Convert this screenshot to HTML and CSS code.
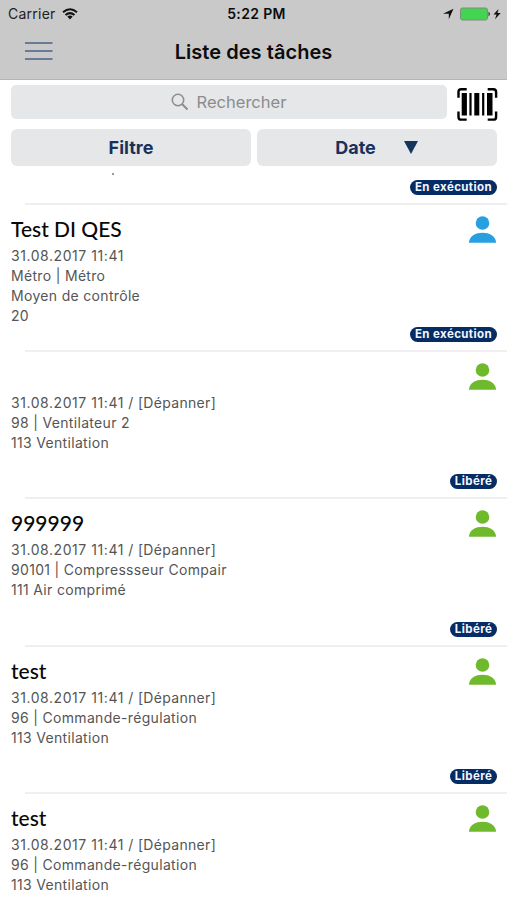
FILE: index.html
```html
<!DOCTYPE html>
<html lang="fr">
<head>
<meta charset="utf-8">
<title>Liste des tâches</title>
<link rel="stylesheet" href="styles.css">
</head>
<body>
<svg class="defs" width="0" height="0" aria-hidden="true">
  <symbol id="person" viewBox="0 0 27 27"><circle cx="13.5" cy="7" r="6.8"/><path d="M0 26.7v-1.2C1.2 20 6.5 16.8 13.5 16.8S25.8 20 27 25.500v1.200z"/></symbol>
</svg>
<header class="header">
  <div class="status">
    <div class="carrier"><span>Carrier</span>
      <svg width="16" height="12" viewBox="0 0 16 12"><g fill="none" stroke="#111" stroke-width="2"><path d="M1 4.200Q8-1.800 15 4.200"/><path d="M3.500 7Q8 3.200 12.500 7"/></g><path d="M5.300 8.500Q8 6.500 10.700 8.500L8 11.500z" fill="#111"/></svg>
    </div>
    <span class="clock">5:22 PM</span>
    <div class="power">
      <svg width="60" height="14" viewBox="0 0 60 14"><path d="M1 6.700 11.500 1.700 6.800 12.200V6.700z" fill="#111"/><rect x="18.500" y="1" width="27" height="12" rx="2" fill="#43d551" stroke="#7c8d7d"/><path d="M46.500 4.500q3 2.500 0 5z" fill="#333"/><path d="M56.500 2 51.500 7.600h3L53 12.200 58.700 6h-3.200z" fill="#111"/></svg>
    </div>
  </div>
  <div class="nav">
    <svg class="menu" width="28" height="20" viewBox="0 0 28 20" stroke="#6a7b98" stroke-width="2"><path d="M0 2h27.500M0 10h27.500M0 18h27.500"/></svg>
    <h1>Liste des tâches</h1>
  </div>
</header>
<div class="tools">
  <div class="search">
    <svg width="18" height="18" viewBox="0 0 18 18" fill="none" stroke="#8b8c8e"><circle cx="7" cy="7" r="5.700" stroke-width="1.500"/><path d="m11 11 5.500 5.500" stroke-width="2"/></svg>
    <span>Rechercher</span>
  </div>
  <svg class="scan" width="42" height="35" viewBox="0 0 42 35"><path d="M10.700 2.200H5.200Q2.500 2.200 2.500 4.900V10.700M31.700 2.200h5.700q2.700 0 2.700 2.700V10.700M2.500 24.500v5.400q0 2.700 2.700 2.700h5.500M31.700 32.600h5.700q2.700 0 2.700-2.700V24.500" fill="none" stroke="#000" stroke-width="2.400"/><path d="M5.700 6h5.200v22.500H5.700zM13.400 6h2.200v22.500h-2.200zM18.300 6h5v22.500h-5zM26.100 6h2.200v22.500h-2.200zM31 6h5.500v22.500H31z"/></svg>
</div>
<div class="buttons">
  <div class="button"><span>Filtre</span></div>
  <div class="button sort"><span>Date</span><svg width="14" height="13" viewBox="0 0 14 13"><path d="M0 0h14L7 13z" fill="#15355f"/></svg></div>
</div>
<main class="list">
  <section class="row partial"><i class="tail"></i><b class="badge">En exécution</b></section>
  <section class="row">
    <div class="info"><h2>Test DI QES</h2><p><span class="stamp">31.08.2017 11:41</span></p><p>Métro | Métro</p><p>Moyen de contrôle</p><p>20</p></div>
    <svg class="person blue"><use href="#person"/></svg><b class="badge">En exécution</b>
  </section>
  <section class="row">
    <div class="info"><h2></h2><p><span class="stamp">31.08.2017 11:41</span> / [Dépanner]</p><p>98 | Ventilateur 2</p><p>113 Ventilation</p></div>
    <svg class="person"><use href="#person"/></svg><b class="badge free">Libéré</b>
  </section>
  <section class="row">
    <div class="info"><h2>999999</h2><p><span class="stamp">31.08.2017 11:41</span> / [Dépanner]</p><p>90101 | Compressseur Compair</p><p>111 Air comprimé</p></div>
    <svg class="person"><use href="#person"/></svg><b class="badge free">Libéré</b>
  </section>
  <section class="row">
    <div class="info"><h2>test</h2><p><span class="stamp">31.08.2017 11:41</span> / [Dépanner]</p><p>96 | Commande-régulation</p><p>113 Ventilation</p></div>
    <svg class="person"><use href="#person"/></svg><b class="badge free">Libéré</b>
  </section>
  <section class="row">
    <div class="info"><h2>test</h2><p><span class="stamp">31.08.2017 11:41</span> / [Dépanner]</p><p>96 | Commande-régulation</p><p>113 Ventilation</p></div>
    <svg class="person"><use href="#person"/></svg>
  </section>
</main>
</body>
</html>
```
FILE: styles.css
```css
* { box-sizing: border-box; }
html, body { height: 900px; }
body { margin: 0; width: 507px; overflow: hidden; display: flex; flex-direction: column; background: #fff; font-family: Inter, "Liberation Sans", sans-serif; }
.defs { position: absolute; }
.header { height: 80px; flex: none; background: #c9c9c9; border-bottom: 1px solid #b5b5b5; color: #0c0c0c; }
.status { height: 27px; padding: 0 5px 0 8px; display: grid; grid-template-columns: 1fr auto 1fr; align-items: center; font-size: 14px; }
.carrier { display: flex; align-items: center; gap: 6px; letter-spacing: .25px; color: #222; }
.clock { font-weight: 600; letter-spacing: .35px; padding-left: 3px; }
.power { justify-self: end; display: flex; }
.nav { height: 50px; display: grid; grid-template-columns: 54px 1fr 54px; align-items: center; }
.menu { margin-left: 25px; margin-top: -2px; }
h1 { margin: 0; text-align: center; font-size: 20px; font-weight: 600; line-height: 24px; letter-spacing: .05px; }
.tools { flex: none; display: flex; padding: 5px 9px 0 11px; height: 44px; justify-content: space-between; }
.search { width: 436px; height: 34px; border-radius: 5px; background: #e5e7e8; display: flex; align-items: center; justify-content: center; gap: 8px; color: #8b8c8e; font-size: 16.5px; padding-right: 1px; }
.scan { margin-top: 2px; }
.buttons { flex: none; height: 42px; padding: 5px 10px 0 11px; display: grid; grid-template-columns: 240px 1fr; gap: 6px; }
.button { height: 37px; border-radius: 6px; background: #e5e7e8; display: flex; align-items: center; justify-content: center; color: #1a315c; font-size: 18px; font-weight: 700; }
.sort { gap: 28px; padding-right: 1px; }
.list { flex: 1; overflow: hidden; }
.row { height: 147.4px; padding: 10px 10px 0 11px; position: relative; }
.row::after { content: ""; position: absolute; left: 25px; right: 0; bottom: 0; height: 2px; background: #efefef; }
.partial { height: 38.6px; }
.tail { position: absolute; left: 112px; top: 7px; width: 2px; height: 2px; border-radius: 1px; background: #777; }
.info { color: #555; font-size: 14px; line-height: 20px; letter-spacing: .32px; }
.stamp { letter-spacing: .56px; }
h2 { margin: 0 0 4px; height: 27px; color: #080808; font: 500 21px/27px Lato, sans-serif; letter-spacing: 0; }
p { margin: 0; }
.person { position: absolute; right: 11px; top: 11px; width: 27px; height: 27px; fill: #6fba2c; }
.blue { fill: #279fe0; }
.badge { position: absolute; right: 10px; bottom: 10px; width: 87px; height: 15px; border-radius: 8px; background: #062c65; color: #f3f7ff; font-size: 11.5px; line-height: 15px; font-weight: 700; text-align: center; letter-spacing: .4px; white-space: nowrap; }
.free { width: 47px; }
```
